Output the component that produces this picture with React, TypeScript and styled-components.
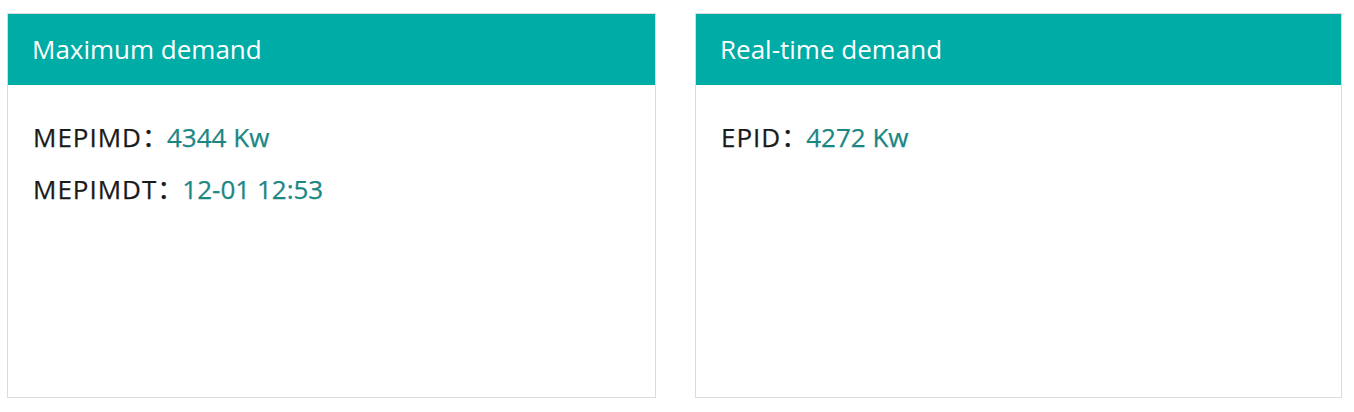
import React from 'react';
import styled, { createGlobalStyle } from 'styled-components';

const GlobalStyle = createGlobalStyle`
  html, body {
    margin: 0;
    padding: 0;
    background: #ffffff;
  }
  body {
    font-family: 'Open Sans', 'Noto Sans', 'Noto Sans CJK SC', sans-serif;
  }
`;

type Item = { label: string; value: string };

const panels: { title: string; items: Item[] }[] = [
  {
    title: 'Maximum demand',
    items: [
      { label: 'MEPIMD', value: '4344 Kw' },
      { label: 'MEPIMDT', value: '12-01 12:53' },
    ],
  },
  {
    title: 'Real-time demand',
    items: [{ label: 'EPID', value: '4272 Kw' }],
  },
];

export default function App() {
  return (
    <>
      <GlobalStyle />
      <Page>
        {panels.map((p) => (
          <Card key={p.title}>
            <CardHeader>{p.title}</CardHeader>
            <CardBody>
              {p.items.map((it) => (
                <Row key={it.label}>
                  <Label>
                    {it.label}
                    <Colon>：</Colon>
                  </Label>
                  <Value>{it.value}</Value>
                </Row>
              ))}
            </CardBody>
          </Card>
        ))}
      </Page>
    </>
  );
}

const Page = styled.div`
  display: grid;
  grid-template-columns: 649px 647px;
  column-gap: 39px;
  padding: 13px 0 0 7px;
  box-sizing: border-box;
  height: 398px;
`;

const Card = styled.div`
  display: flex;
  flex-direction: column;
  border: 1px solid #dcdcdc;
  background: #fff;
  box-sizing: border-box;
  height: 385px;
`;

const CardHeader = styled.div`
  height: 71px;
  background: #00aca6;
  color: #ffffff;
  font-size: 26px;
  line-height: 71px;
  padding-left: 24px;
  flex-shrink: 0;
`;

const CardBody = styled.div`
  padding: 26px 0 0 25px;
  display: flex;
  flex-direction: column;
`;

const Row = styled.div`
  display: flex;
  align-items: baseline;
  height: 52px;
  line-height: 52px;
  font-size: 26px;
  -webkit-text-stroke: 0.25px currentColor;
`;

const Label = styled.span`
  color: #1a1a1a;
  letter-spacing: 1px;
`;

const Colon = styled.span`
  letter-spacing: -3px;
`;

const Value = styled.span`
  color: #1b8784;
  margin-left: 2px;
`;
